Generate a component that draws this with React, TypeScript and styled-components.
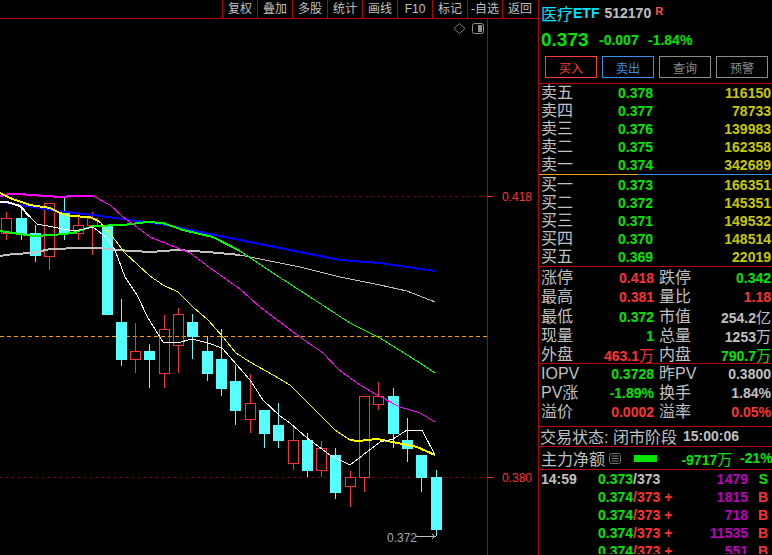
import React from "react";
import styled, { createGlobalStyle } from "styled-components";

const RED = "#ff3232";
const GREEN = "#00e600";
const GRAY = "#c0c0c0";
const YELLOW = "#c8c800";
const PURPLE = "#c000c0";
const LINE = "#b80000";

const Global = createGlobalStyle`
  html, body { margin: 0; padding: 0; background: #000; height: 555px; overflow: hidden; }
  body { font-family: "Liberation Sans", "Noto Sans CJK SC", sans-serif; color: ${GRAY}; }
`;

const Screen = styled.div`
  width: 772px; height: 555px; display: flex; overflow: hidden; background: #000;
`;
const ChartColumn = styled.div`
  width: 538px; flex: none; display: flex; flex-direction: column;
`;
const Toolbar = styled.div`
  height: 18px; flex: none; display: flex; justify-content: flex-end; padding-right: 1px;
  border-bottom: 1px solid ${LINE};
`;
const ToolButton = styled.div`
  width: 34px; border-left: 1px solid ${LINE}; display: flex; align-items: center; justify-content: center;
  font-size: 12px; line-height: 18px; color: ${GRAY}; white-space: nowrap;
`;
const ChartSvg = styled.svg`
  display: block; width: 538px; height: 536px; flex: none;
`;
const AxisText = styled.text`
  font-family: "Liberation Sans", sans-serif; font-size: 12px;
`;
const Side = styled.div`
  width: 233px; flex: none; border-left: 1px solid ${LINE}; display: flex; flex-direction: column;
`;
const Head = styled.div`
  height: 83px; flex: none; border-bottom: 1px solid ${LINE}; box-sizing: content-box; display: flex; flex-direction: column;
`;
const NameRow = styled.div`
  height: 26px; display: flex; align-items: center; padding-left: 2px; white-space: nowrap;
`;
const Name = styled.span`
  color: #00e4ff; font-size: 16px; font-weight: 400;
`;
const NameLatin = styled.span`
  color: #00e4ff; font-size: 14px; font-weight: 700; margin: 0 5px 0 0;
`;
const Code = styled.span`
  color: ${GRAY}; font-size: 14px; font-weight: 700;
`;
const RMark = styled.span`
  color: #ff5050; font-size: 11px; font-weight: 700; margin: -5px 0 0 4px;
`;
const PriceRow = styled.div`
  height: 27px; display: flex; align-items: center; padding-left: 2px; color: ${GREEN}; white-space: nowrap;
`;
const BigPrice = styled.span`
  font-size: 19px; font-weight: 700; width: 58px;
`;
const Change = styled.span<{ $w: number }>`
  font-size: 14px; font-weight: 700; width: ${(p) => p.$w}px;
`;
const Buttons = styled.div`
  display: flex; gap: 5px; padding: 3px 0 0 6px;
`;
const ActionButton = styled.div<{ $c: string }>`
  width: 50px; height: 20px; border: 1px solid ${(p) => p.$c}; color: ${(p) => p.$c};
  display: flex; align-items: center; justify-content: center; font-size: 12px;
`;
const Section = styled.div<{ $h: number; $pt?: number; $line?: boolean }>`
  height: ${(p) => p.$h}px; flex: none; box-sizing: border-box; padding-top: ${(p) => p.$pt ?? 0}px;
  ${(p) => (p.$line === false ? "" : `border-bottom: 1px solid ${LINE};`)}
  overflow: hidden;
`;
const Split = styled.div`
  height: 1px; flex: none; background: linear-gradient(to right, #f0a020 0 99px, #2f8fe8 99px);
`;
const QuoteRow = styled.div`
  height: 18px; display: grid; grid-template-columns: 77px 35px 1fr; align-items: center; padding: 0 1px 0 2px;
  font-size: 14px; font-weight: 700; line-height: 18px;
`;
const Label = styled.span`
  font-size: 16px; font-weight: 400; color: ${GRAY}; white-space: nowrap; line-height: 18px;
`;
const Value = styled.span<{ $c: string; $left?: boolean }>`
  color: ${(p) => p.$c}; text-align: ${(p) => (p.$left ? "left" : "right")}; white-space: nowrap;
`;
const StatRow = styled.div`
  height: 19px; display: grid; grid-template-columns: 40px 73px 40px 77px; column-gap: 0; align-items: center;
  padding: 0 1px 0 2px; font-size: 14px; font-weight: 700;
`;
const StatLabel = styled(Label)<{ $indent?: boolean }>`
  padding-left: ${(p) => (p.$indent ? 5 : 0)}px;
`;
const SmallUnit = styled.span`
  font-size: 15px; font-weight: 400;
`;
const StatusRow = styled.div`
  height: 18px; display: flex; align-items: center; padding-left: 1px; white-space: nowrap; font-size: 16px; color: ${GRAY};
`;
const StatusTime = styled.span`
  font-size: 14px; font-weight: 700; margin-left: 6px;
`;
const FlowRow = styled.div`
  height: 22px; display: flex; align-items: center; padding-left: 2px; white-space: nowrap; position: relative;
`;
const FlowLabel = styled.span`
  font-size: 16px; color: ${GRAY}; width: 67px;
`;
const FlowBar = styled.div`
  width: 24px; height: 7px; background: ${GREEN}; margin: 0 24px 0 13px;
`;
const FlowValue = styled.span<{ $w: number }>`
  font-size: 14px; font-weight: 700; color: ${GREEN}; width: ${(p) => p.$w}px;
`;
const TickRow = styled.div`
  height: 18px; display: grid; grid-template-columns: 57px 71px 79px 20px; align-items: center; padding-left: 2px;
  font-size: 14px; font-weight: 700; white-space: nowrap; margin-left: 0;
`;
const TickPrice = styled.span`
  color: ${GREEN};
`;
const TickRest = styled.span<{ $c: string }>`
  color: ${(p) => p.$c};
`;
const TickVol = styled.span`
  color: ${PURPLE}; text-align: right;
`;
const TickFlag = styled.span<{ $c: string }>`
  color: ${(p) => p.$c}; text-align: right;
`;

type Candle = [number, number, number, number, number, 0 | 1];
// left x, body top, body bottom, wick top, wick bottom, 1=rising (red hollow)
const candles: Candle[] = [
  [1, 218, 233, 212, 240, 1], [16, 218, 233, 205, 240, 0], [30, 233, 255, 225, 262, 0],
  [44, 203, 256, 203, 270, 1], [59, 212, 233, 196, 240, 0], [73, 225, 233, 212, 240, 1],
  [87, 218, 225, 212, 255, 1], [102, 225, 314, 225, 314, 0], [116, 322, 359, 299, 366, 0],
  [130, 351, 359, 323, 373, 1], [144, 351, 359, 344, 388, 0], [159, 329, 373, 315, 388, 1],
  [173, 314, 345, 308, 373, 1], [187, 322, 336, 314, 359, 0], [202, 351, 373, 336, 381, 0],
  [216, 359, 388, 329, 396, 0], [230, 381, 410, 365, 425, 0], [245, 403, 419, 374, 433, 1],
  [259, 410, 433, 410, 448, 0], [273, 425, 440, 403, 448, 0], [288, 440, 463, 425, 470, 1],
  [302, 440, 470, 433, 477, 0], [316, 448, 470, 441, 477, 1], [330, 455, 492, 448, 499, 0],
  [345, 477, 486, 471, 507, 1], [359, 396, 477, 396, 492, 1], [373, 396, 404, 382, 410, 1],
  [388, 396, 433, 388, 448, 0], [402, 440, 448, 418, 462, 0], [416, 455, 477, 455, 492, 0],
  [431, 477, 529, 470, 536, 0],
];

const maLines: { c: string; w: number; p: string }[] = [
  { c: "#c0c0c0", w: 2, p: "0,256 13,254 33,253 50,249 83,248 100,248 117,250 150,252 177,250 207,252 240,255" },
  { c: "#c0c0c0", w: 1, p: "240,255 260,259 300,267 340,277 380,285 407,291 435,302" },
  { c: "#0000ff", w: 2, p: "0,202 13,204 33,207 57,211 93,215 123,219 167,225 200,232 240,240 280,248 340,260 380,263 435,271" },
  { c: "#00ff00", w: 2, p: "0,231 33,236 53,235 73,233 93,226 123,225 147,222 163,223 183,230 213,237 240,251" },
  { c: "#00ff00", w: 1, p: "240,251 273,273 307,295 350,323 380,338 420,363 435,373" },
  { c: "#ff00ff", w: 2, p: "0,196 10,194 20,194 45,196 60,197 75,196 93,196" },
  { c: "#ff00ff", w: 1, p: "93,196 110,205 123,217 137,227 150,237 170,245 190,253 213,270 240,289 260,307 280,322 297,335 323,353 339,370 360,385 377,395 400,407 420,413 435,422" },
  { c: "#ffff00", w: 2, p: "0,193 10,198 30,205 50,208 60,213 70,216 90,217 100,222" },
  { c: "#ffff00", w: 1, p: "100,222 115,240 125,253 150,276 163,285 178,292 193,307 208,320 223,337 236,353 250,362 273,375 290,385 313,408 335,430 350,440" },
  { c: "#ffff00", w: 2, p: "350,440 358,441 377,439 403,444 417,447 435,455" },
  { c: "#ffffff", w: 2, p: "0,202 7,202 20,206 30,217" },
  { c: "#ffffff", w: 1, p: "30,217 37,224 53,227 63,229 75,231 93,227 107,238 115,250 125,277 137,295 148,318 163,342 177,343 192,339 208,343 222,348 237,365 250,380 263,400 280,416 290,423 307,438 330,455 350,465 363,455 380,442 393,439 407,430 422,430 435,455" },
];

const tools = ["复权", "叠加", "多股", "统计", "画线", "F10", "标记", "-自选", "返回"];

const sells = [
  ["卖五", "0.378", "116150"], ["卖四", "0.377", "78733"], ["卖三", "0.376", "139983"],
  ["卖二", "0.375", "162358"], ["卖一", "0.374", "342689"],
];
const buys = [
  ["买一", "0.373", "166351"], ["买二", "0.372", "145351"], ["买三", "0.371", "149532"],
  ["买四", "0.370", "148514"], ["买五", "0.369", "22019"],
];

type Stat = [string, React.ReactNode, string, string, React.ReactNode, string];
const wan = <SmallUnit>万</SmallUnit>;
const stats: Stat[] = [
  ["涨停", "0.418", RED, "跌停", "0.342", GREEN],
  ["最高", "0.381", RED, "量比", "1.18", RED],
  ["最低", "0.372", GREEN, "市值", <>254.2<SmallUnit>亿</SmallUnit></>, GRAY],
  ["现量", "1", GREEN, "总量", <>1253{wan}</>, GRAY],
  ["外盘", <>463.1{wan}</>, RED, "内盘", <>790.7{wan}</>, GREEN],
];
const etf: Stat[] = [
  ["IOPV", "0.3728", GREEN, "昨PV", "0.3800", GRAY],
  ["PV涨", "-1.89%", GREEN, "换手", "1.84%", GRAY],
  ["溢价", "0.0002", RED, "溢率", "0.05%", RED],
];
const ticks = [
  { p: "0.373", s: "/373", c: GRAY, v: "1479", f: "S", fc: GREEN },
  { p: "0.374", s: "/373 +", c: RED, v: "1815", f: "B", fc: RED },
  { p: "0.374", s: "/373 +", c: RED, v: "718", f: "B", fc: RED },
  { p: "0.374", s: "/373 +", c: RED, v: "11535", f: "B", fc: RED },
  { p: "0.374", s: "/373 +", c: RED, v: "551", f: "B", fc: RED },
];

function Chart() {
  return (
    <ChartSvg viewBox="0 19 538 536">
      <line x1="0" x2="487" y1="196.5" y2="196.5" stroke="#b00000" strokeDasharray="1 5" shapeRendering="crispEdges" />
      <line x1="0" x2="487" y1="477.5" y2="477.5" stroke="#b00000" strokeDasharray="1 5" shapeRendering="crispEdges" />
      <line x1="0" x2="487" y1="336.5" y2="336.5" stroke="#ff9a00" strokeDasharray="4 3" shapeRendering="crispEdges" />
      {candles.map(([x, t, b, wt, wb, up]) => {
        const c = up ? RED : "#54ffff";
        return (
          <g key={x} shapeRendering="crispEdges">
            <line x1={x + 5.5} x2={x + 5.5} y1={wt} y2={t} stroke={c} />
            <line x1={x + 5.5} x2={x + 5.5} y1={b} y2={wb} stroke={c} />
            {up ? (
              <rect x={x + 0.5} y={t + 0.5} width={10} height={b - t} fill="none" stroke={c} />
            ) : (
              <rect x={x} y={t} width={11} height={b - t + 1} fill={c} />
            )}
          </g>
        );
      })}
      {maLines.map((l) => (
        <polyline key={l.p} points={l.p} fill="none" stroke={l.c} strokeWidth={l.w} shapeRendering="crispEdges" />
      ))}
      <line x1="487.5" x2="487.5" y1="19" y2="555" stroke={LINE} shapeRendering="crispEdges" />
      <line x1="488" x2="493" y1="196.5" y2="196.5" stroke={RED} shapeRendering="crispEdges" />
      <line x1="488" x2="493" y1="477.5" y2="477.5" stroke={RED} shapeRendering="crispEdges" />
      <AxisText x="502" y="201" fill={RED}>0.418</AxisText>
      <AxisText x="502" y="482" fill={RED}>0.380</AxisText>
      <AxisText x="387" y="542" fill="#a8a8a8">0.372</AxisText>
      <path d="M416 536.5H435M432 534.5L435 536.5L432 538.5" fill="none" stroke="#c0c0c0" shapeRendering="crispEdges" />
      <path d="M459.5 23.5L465 28.5L459.5 33.5L454 28.5Z" fill="none" stroke="#808080" />
      <rect x="472.5" y="23.5" width="11" height="10" rx="2" fill="none" stroke="#909090" />
      <rect x="478" y="25" width="4" height="7" fill="#909090" shapeRendering="crispEdges" />
    </ChartSvg>
  );
}

const ListIcon = () => (
  <svg width="12" height="11" viewBox="0 0 12 11" style={{ marginLeft: 1, flex: "none" }}>
    <rect x="0.5" y="0.5" width="11" height="10" rx="2" fill="none" stroke="#707070" />
    <path d="M2.5 3H9.5M2.5 5.5H9.5M2.5 8H9.5" stroke="#808080" />
  </svg>
);

export default function App() {
  return (
    <Screen>
      <Global />
      <ChartColumn>
        <Toolbar>
          {tools.map((t) => <ToolButton key={t}>{t}</ToolButton>)}
        </Toolbar>
        <Chart />
      </ChartColumn>
      <Side>
        <Head>
          <NameRow>
            <Name>医疗</Name>
            <NameLatin>ETF</NameLatin>
            <Code>512170</Code>
            <RMark>R</RMark>
          </NameRow>
          <PriceRow>
            <BigPrice>0.373</BigPrice>
            <Change $w={49}>-0.007</Change>
            <Change $w={50}>-1.84%</Change>
          </PriceRow>
          <Buttons>
            <ActionButton $c="#ff3a3a">买入</ActionButton>
            <ActionButton $c="#3a90e8">卖出</ActionButton>
            <ActionButton $c="#8c8c8c">查询</ActionButton>
            <ActionButton $c="#8c8c8c">预警</ActionButton>
          </Buttons>
        </Head>
        <Section $h={90} $line={false}>
          {sells.map(([a, b, c]) => (
            <QuoteRow key={a}><Label>{a}</Label><Value $c={GREEN}>{b}</Value><Value $c={YELLOW}>{c}</Value></QuoteRow>
          ))}
        </Section>
        <Split />
        <Section $h={92} $pt={1}>
          {buys.map(([a, b, c]) => (
            <QuoteRow key={a}><Label>{a}</Label><Value $c={GREEN}>{b}</Value><Value $c={YELLOW}>{c}</Value></QuoteRow>
          ))}
        </Section>
        <Section $h={97} $pt={1}>
          {stats.map(([a, b, bc, c, d, dc]) => (
            <StatRow key={a as string}>
              <StatLabel>{a}</StatLabel><Value $c={bc}>{b}</Value>
              <StatLabel $indent>{c}</StatLabel><Value $c={dc}>{d}</Value>
            </StatRow>
          ))}
        </Section>
        <Section $h={63}>
          {etf.map(([a, b, bc, c, d, dc]) => (
            <StatRow key={a as string}>
              <StatLabel>{a}</StatLabel><Value $c={bc}>{b}</Value>
              <StatLabel $indent>{c}</StatLabel><Value $c={dc}>{d}</Value>
            </StatRow>
          ))}
        </Section>
        <Section $h={20}>
          <StatusRow>交易状态: 闭市阶段<StatusTime>15:00:06</StatusTime></StatusRow>
        </Section>
        <Section $h={23}>
          <FlowRow>
            <FlowLabel>主力净额</FlowLabel>
            <ListIcon />
            <FlowBar />
            <FlowValue $w={59}>-9717<SmallUnit>万</SmallUnit></FlowValue>
            <FlowValue $w={32}>-21%</FlowValue>
          </FlowRow>
        </Section>
        <Section $h={84} $line={false}>
          {ticks.map((t, i) => (
            <TickRow key={i}>
              <span>{i === 0 ? "14:59" : ""}</span>
              <span><TickPrice>{t.p}</TickPrice><TickRest $c={t.c}>{t.s}</TickRest></span>
              <TickVol>{t.v}</TickVol>
              <TickFlag $c={t.fc}>{t.f}</TickFlag>
            </TickRow>
          ))}
        </Section>
      </Side>
    </Screen>
  );
}
